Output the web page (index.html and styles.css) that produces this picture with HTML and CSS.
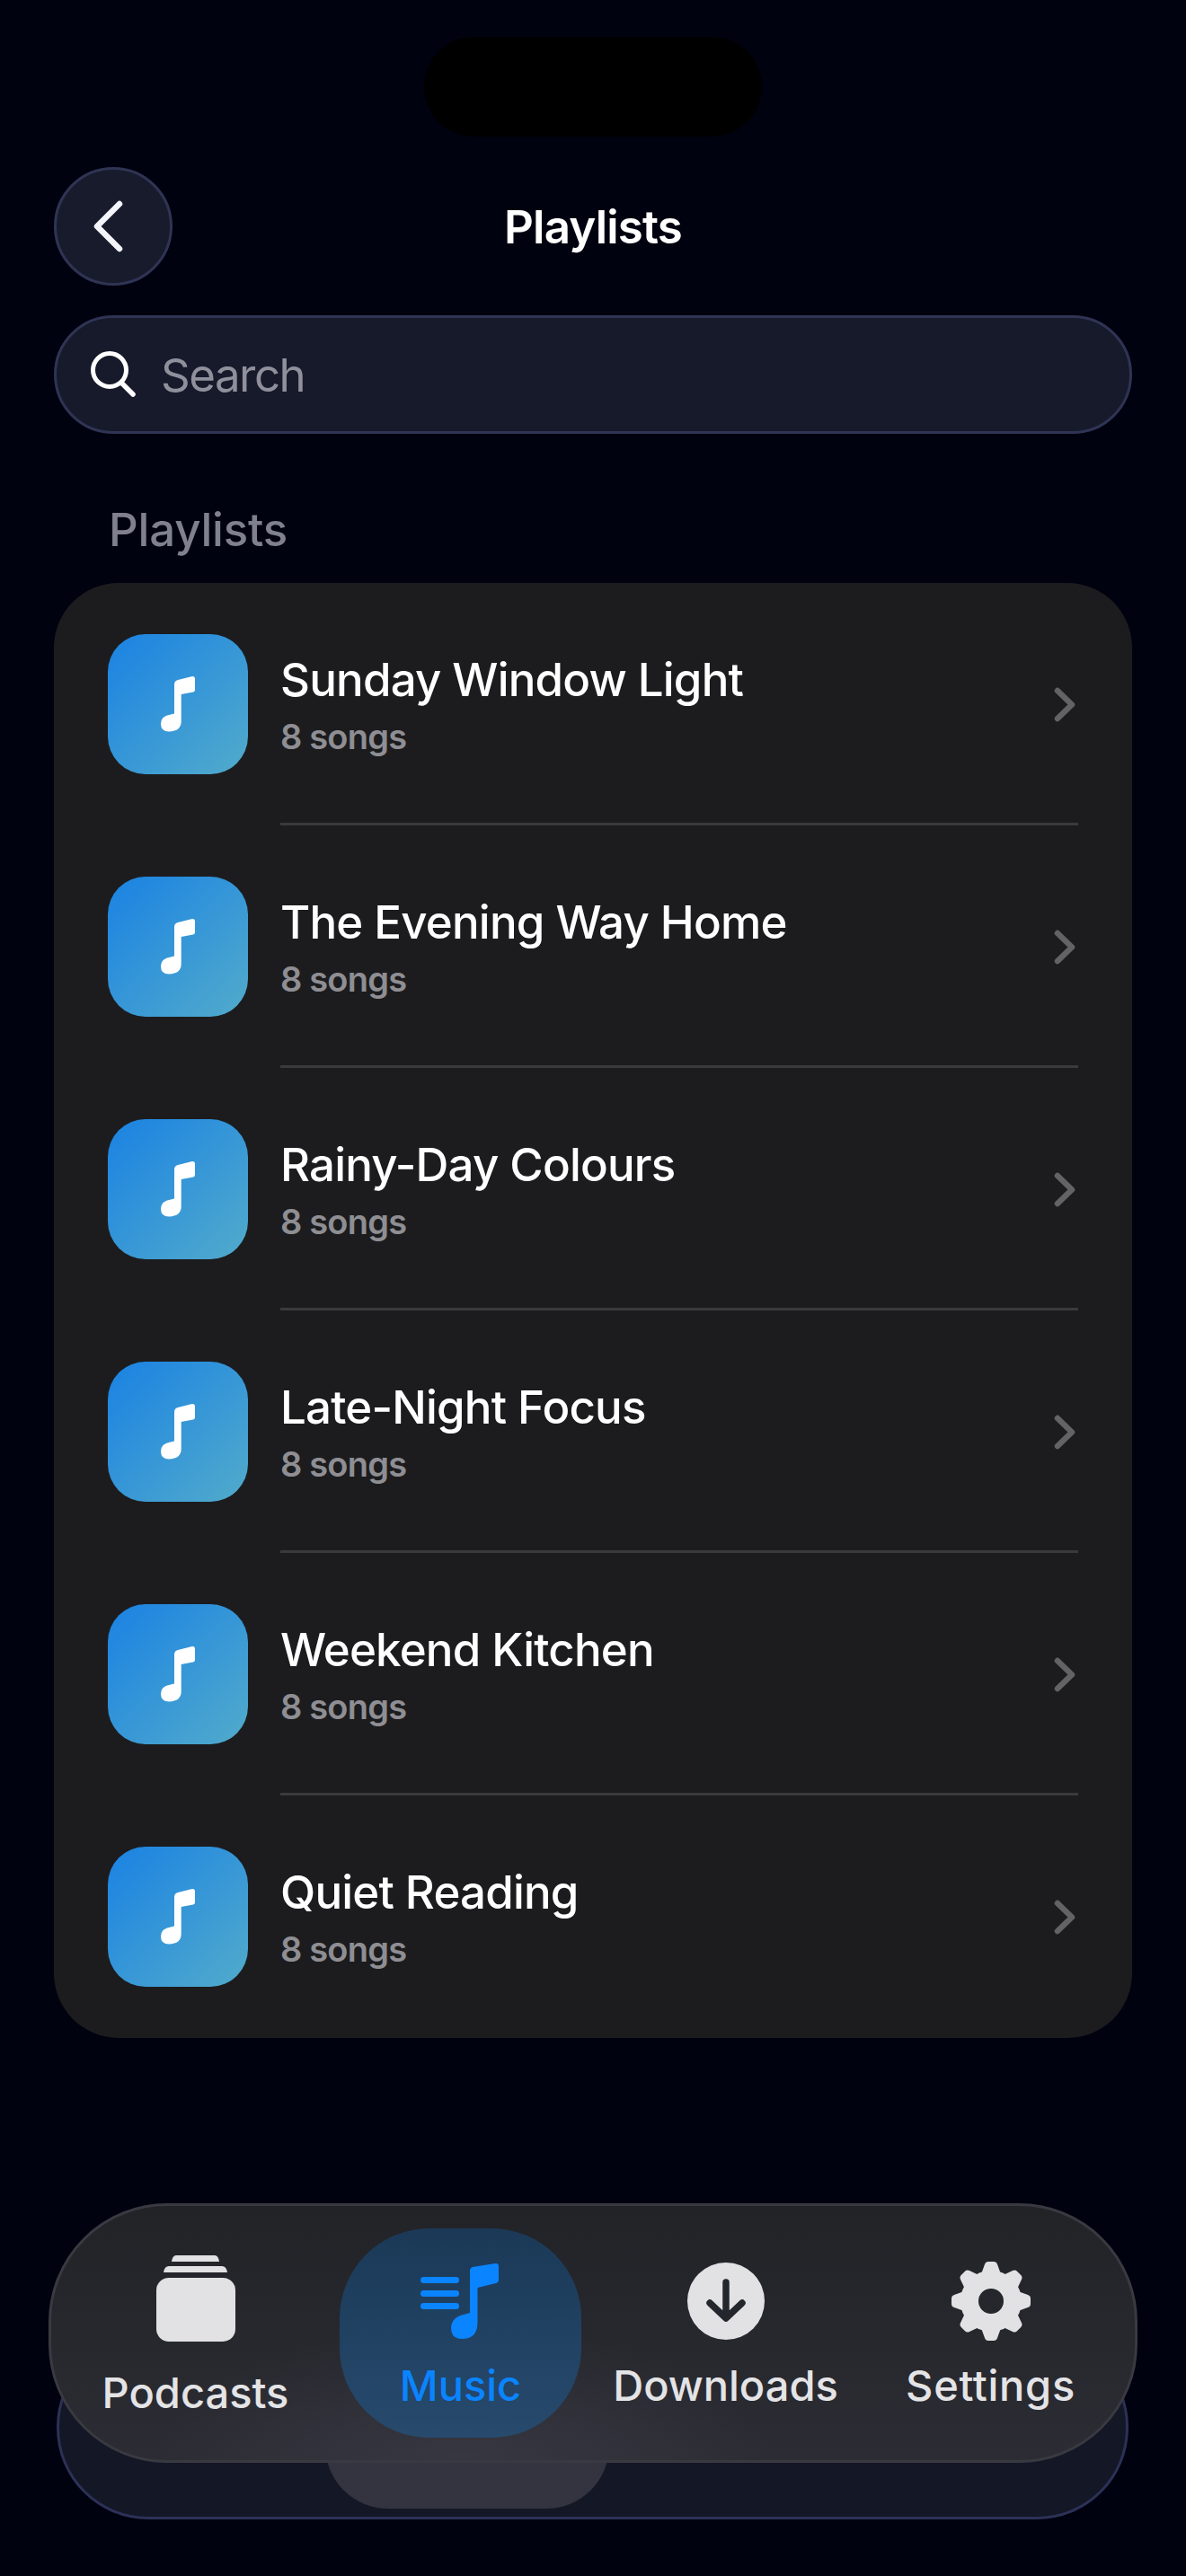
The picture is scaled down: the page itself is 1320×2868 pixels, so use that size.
FILE: index.html
```html
<!DOCTYPE html>
<html lang="en">
<head>
<meta charset="utf-8">
<title>Playlists</title>
<link rel="stylesheet" href="styles.css">
</head>
<body>
<svg class="defs" width="0" height="0" aria-hidden="true">
  <symbol id="note" viewBox="0 0 156 156"><path d="M74 56Q74 52 78 51L94 47Q97 46.5 97 49.5L97 62Q97 64 95 64.5L81.7 67L81.7 97Q81.7 108 68 108.5Q59 108.5 59 100Q59 91 70 89.5L74 88.5Z" fill="#fff"/></symbol>
  <symbol id="chev" viewBox="0 0 27 41"><path d="M5 5L21 20.500L5 36" fill="none" stroke="#636366" stroke-width="6.500" stroke-linecap="round" stroke-linejoin="round"/></symbol>
</svg>
<main class="screen">
  <div class="island"></div>
  <header class="nav">
    <button class="back"><svg width="38" height="62" viewBox="0 0 38 62"><path d="M33 6L8 31L33 56" fill="none" stroke="#f4f5fb" stroke-width="6.500" stroke-linecap="round" stroke-linejoin="round"/></svg></button>
    <h1 class="nav-title">Playlists</h1>
  </header>
  <div class="search">
    <svg class="search-icon" width="52" height="52" viewBox="0 0 52 52"><circle cx="22" cy="21" r="18.500" fill="none" stroke="#fff" stroke-width="5"/><path d="M35 35L48 48" stroke="#fff" stroke-width="5.500" stroke-linecap="round"/></svg>
    <span class="search-text">Search</span>
  </div>
  <h2 class="section">Playlists</h2>
  <section class="card">
    <div class="row"><div class="tile"><svg width="156" height="156"><use href="#note"/></svg></div><div class="body"><div class="text"><div class="name">Sunday Window Light</div><div class="count">8 songs</div></div><svg class="chev" width="27" height="41"><use href="#chev"/></svg></div></div>
    <div class="row"><div class="tile"><svg width="156" height="156"><use href="#note"/></svg></div><div class="body"><div class="text"><div class="name">The Evening Way Home</div><div class="count">8 songs</div></div><svg class="chev" width="27" height="41"><use href="#chev"/></svg></div></div>
    <div class="row"><div class="tile"><svg width="156" height="156"><use href="#note"/></svg></div><div class="body"><div class="text"><div class="name">Rainy-Day Colours</div><div class="count">8 songs</div></div><svg class="chev" width="27" height="41"><use href="#chev"/></svg></div></div>
    <div class="row"><div class="tile"><svg width="156" height="156"><use href="#note"/></svg></div><div class="body"><div class="text"><div class="name">Late-Night Focus</div><div class="count">8 songs</div></div><svg class="chev" width="27" height="41"><use href="#chev"/></svg></div></div>
    <div class="row"><div class="tile"><svg width="156" height="156"><use href="#note"/></svg></div><div class="body"><div class="text"><div class="name">Weekend Kitchen</div><div class="count">8 songs</div></div><svg class="chev" width="27" height="41"><use href="#chev"/></svg></div></div>
    <div class="row"><div class="tile"><svg width="156" height="156"><use href="#note"/></svg></div><div class="body"><div class="text"><div class="name">Quiet Reading</div><div class="count">8 songs</div></div><svg class="chev" width="27" height="41"><use href="#chev"/></svg></div></div>
  </section>
  <div class="dock-back"></div>
  <div class="dock-glow"></div>
  <nav class="dock">
    <div class="tab tab-podcasts">
      <svg width="88" height="96" viewBox="0 0 88 96"><path d="M22 0H65Q69 0 70 7H17Q18 0 22 0Z" fill="#e2e2e4"/><path d="M14 12H73Q78 12 79 19H8Q9 12 14 12Z" fill="#e2e2e4"/><rect x="0" y="25" width="88" height="71" rx="14" fill="#e2e2e4"/></svg>
      <span class="tab-label">Podcasts</span>
    </div>
    <div class="tab tab-active">
      <svg width="90" height="90" viewBox="0 0 90 90"><g fill="#0a84ff"><rect x="0" y="18" width="43" height="7" rx="3.500"/><rect x="0" y="33" width="43" height="7" rx="3.500"/><rect x="0" y="47" width="43" height="7" rx="3.500"/><path d="M55 11Q55 8 58 7L83 3Q87 2.500 87 6L87 21Q87 24 84 25L63.500 30L63.500 70Q63 87 46 87Q34 87 34 75Q34 63 48 60L55 58Z"/></g></svg>
      <span class="tab-label">Music</span>
    </div>
    <div class="tab">
      <svg width="90" height="90" viewBox="0 0 90 90"><circle cx="45" cy="45" r="43" fill="#e2e2e4"/><path d="M45 24V63M27 47L45 64L63 47" fill="none" stroke="#24262d" stroke-width="7.500" stroke-linecap="round" stroke-linejoin="round"/></svg>
      <span class="tab-label">Downloads</span>
    </div>
    <div class="tab tab-settings">
      <svg width="90" height="90" viewBox="-45 -45 90 90"><g fill="#e2e2e4"><circle r="24" fill="none" stroke="#e2e2e4" stroke-width="20"/><path d="M-11 -30L-7 -41Q-6 -44 -3 -44H3Q6 -44 7 -41L11 -30Z"/><path d="M-11 -30L-7 -41Q-6 -44 -3 -44H3Q6 -44 7 -41L11 -30Z" transform="rotate(45)"/><path d="M-11 -30L-7 -41Q-6 -44 -3 -44H3Q6 -44 7 -41L11 -30Z" transform="rotate(90)"/><path d="M-11 -30L-7 -41Q-6 -44 -3 -44H3Q6 -44 7 -41L11 -30Z" transform="rotate(135)"/><path d="M-11 -30L-7 -41Q-6 -44 -3 -44H3Q6 -44 7 -41L11 -30Z" transform="rotate(180)"/><path d="M-11 -30L-7 -41Q-6 -44 -3 -44H3Q6 -44 7 -41L11 -30Z" transform="rotate(225)"/><path d="M-11 -30L-7 -41Q-6 -44 -3 -44H3Q6 -44 7 -41L11 -30Z" transform="rotate(270)"/><path d="M-11 -30L-7 -41Q-6 -44 -3 -44H3Q6 -44 7 -41L11 -30Z" transform="rotate(315)"/></g></svg>
      <span class="tab-label">Settings</span>
    </div>
  </nav>
</main>
</body>
</html>
```
FILE: styles.css
```css
* { box-sizing: border-box; }
html, body { margin: 0; padding: 0; }
body {
  width: 1320px;
  height: 2868px;
  overflow: hidden;
  background: #01020f;
  font-family: Inter, "Noto Sans", "Liberation Sans", sans-serif;
  color: #fff;
}
.defs { position: absolute; }
.screen {
  position: relative;
  height: 2868px;
  padding: 41px 60px 0;
}
.island {
  width: 376px;
  height: 111px;
  margin: 0 auto;
  background: #000;
  border-radius: 56px;
}
.nav {
  position: relative;
  display: flex;
  align-items: center;
  margin-top: 34px;
  height: 132px;
}
.back {
  width: 132px;
  height: 132px;
  padding: 0 14px 0 0;
  display: flex;
  align-items: center;
  justify-content: center;
  background: #181b2b;
  border: 3px solid #2f3454;
  border-radius: 50%;
}
.nav-title {
  position: absolute;
  left: 0;
  right: 0;
  margin: 2px 0 0;
  text-align: center;
  font-size: 51px;
  line-height: 58px;
  font-weight: 600;
  letter-spacing: -0.8px;
}
.search {
  display: flex;
  align-items: center;
  gap: 27px;
  height: 132px;
  margin-top: 33px;
  padding: 0 37px;
  background: #171a2b;
  border: 3px solid #2f3454;
  border-radius: 66px;
}
.search-text {
  padding-top: 2px;
  font-size: 51px;
  line-height: 60px;
  letter-spacing: -1.5px;
  color: #8f909c;
}
.section {
  margin: 78px 0 0;
  padding-left: 61px;
  font-size: 51px;
  line-height: 58px;
  font-weight: 500;
  letter-spacing: -0.2px;
  color: #80818e;
}
.card {
  margin-top: 30px;
  padding: 0 60px;
  background: #1c1c1e;
  border-radius: 72px;
}
.row {
  display: flex;
  align-items: stretch;
  gap: 36px;
}
.tile {
  flex: none;
  width: 156px;
  height: 156px;
  margin: 57px 0;
  border-radius: 42px;
  background: linear-gradient(135deg, #1a82e3, #52abcb);
}
.tile svg { display: block; }
.body {
  flex: 1;
  display: flex;
  align-items: center;
  justify-content: space-between;
  padding-top: 3px;
  border-bottom: 3px solid #3a3a3c;
}
.row:last-child .body { border-bottom: 0; padding-top: 0; }
.text { padding-top: 2px; }
.name {
  font-size: 51px;
  line-height: 60px;
  font-weight: 500;
  letter-spacing: -0.8px;
}
.count {
  margin-top: 10px;
  font-size: 38px;
  line-height: 46px;
  font-weight: 600;
  letter-spacing: -0.8px;
  color: #8e8e93;
}
.chev { margin-right: 1px; }
.dock-back {
  position: absolute;
  left: 63px;
  top: 2600px;
  width: 1193px;
  height: 205px;
  background: #141725;
  border: 3px solid #2c3157;
  border-top: 0;
  border-radius: 102px;
}
.dock-glow {
  position: absolute;
  left: 362px;
  top: 2600px;
  width: 316px;
  height: 193px;
  background: #33343f;
  border-radius: 70px;
}
.dock {
  position: absolute;
  left: 54px;
  top: 2453px;
  width: 1212px;
  height: 289px;
  padding: 0 13px;
  display: grid;
  grid-template-columns: repeat(4, 1fr);
  align-items: center;
  background:
    radial-gradient(ellipse 340px 150px at 38% 100%, rgba(70, 70, 85, 0.4), transparent),
    linear-gradient(180deg, #222327, #2c2d34);
  border: 3px solid #393a41;
  border-radius: 132px;
}
.tab {
  display: flex;
  flex-direction: column;
  align-items: center;
  justify-content: center;
  gap: 22px;
  height: 233px;
  margin: 0 13px;
  padding-top: 3px;
  color: #e4e4e6;
  white-space: nowrap;
}
.tab svg { display: block; }
.tab-label {
  font-size: 47px;
  line-height: 53px;
  font-weight: 500;
}
.tab-podcasts { gap: 30px; padding-top: 6px; }
.tab-settings .tab-label { letter-spacing: 0.7px; }
.tab-active {
  color: #0a84ff;
  background: linear-gradient(180deg, #1b3957, #274a6d);
  border-radius: 100px;
}
```
